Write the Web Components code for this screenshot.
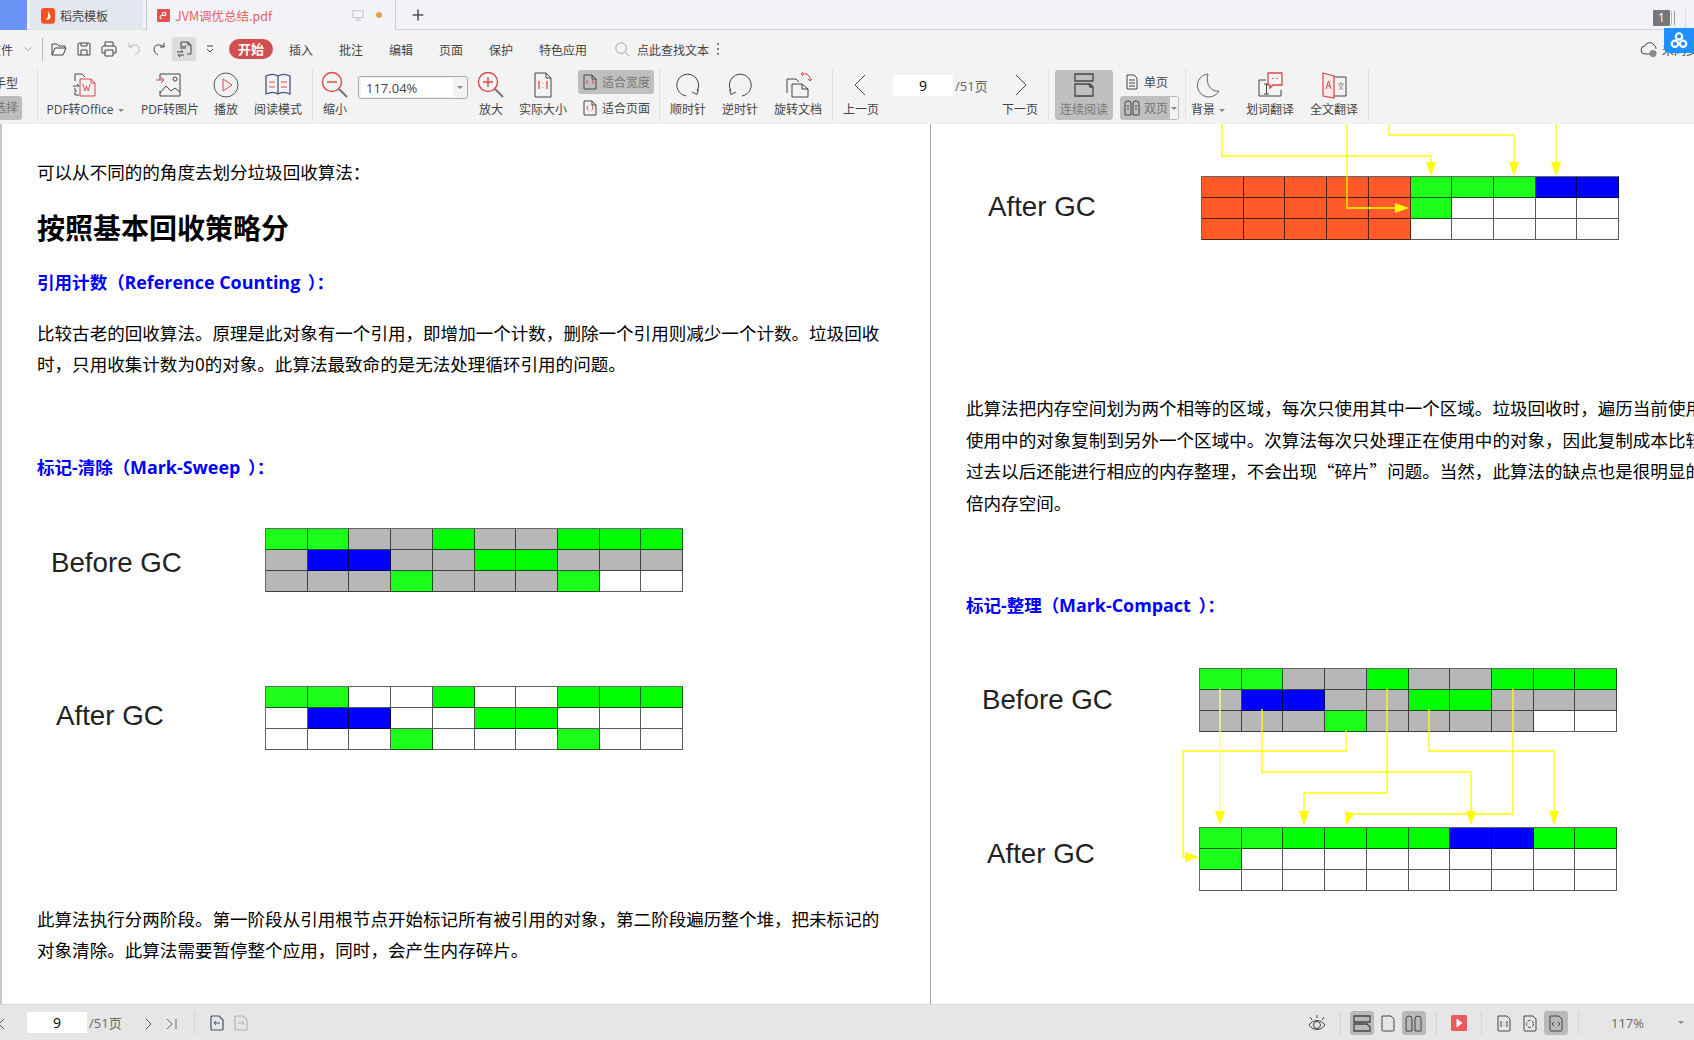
<!DOCTYPE html>
<html lang="zh-CN">
<head>
<meta charset="utf-8">
<title>JVM调优总结.pdf</title>
<style>
  html, body { margin: 0; height: 100%; overflow: hidden; background: #fff; }
  body { font-family: "Noto Sans CJK SC", "Noto Sans", sans-serif; }
</style>
</head>
<body>
<wps-app>
  <wps-titlebar slot="top"></wps-titlebar>
  <wps-menubar slot="top"></wps-menubar>
  <wps-ribbon slot="top">
    <wps-rb-left></wps-rb-left>
    <wps-sep></wps-sep>
    <wps-rb-btn icon="pdfoffice" w="94" caret>PDF转Office</wps-rb-btn>
    <wps-rb-btn icon="pdfimage" w="76">PDF转图片</wps-rb-btn>
    <wps-rb-btn icon="play" w="36">播放</wps-rb-btn>
    <wps-rb-btn icon="book" w="68">阅读模式</wps-rb-btn>
    <wps-sep></wps-sep>
    <wps-rb-btn icon="zoomout" w="44">缩小</wps-rb-btn>
    <wps-zoom-box>117.04%</wps-zoom-box>
    <wps-rb-btn icon="zoomin" w="46">放大</wps-rb-btn>
    <wps-rb-btn icon="actual" w="58">实际大小</wps-rb-btn>
    <wps-rb-pair w="87" pad="6">
      <wps-rb-small icon="fitwidth" active>适合宽度</wps-rb-small>
      <wps-rb-small icon="fitpage">适合页面</wps-rb-small>
    </wps-rb-pair>
    <wps-sep></wps-sep>
    <wps-rb-btn icon="cw" w="56">顺时针</wps-rb-btn>
    <wps-rb-btn icon="ccw" w="48">逆时针</wps-rb-btn>
    <wps-rb-btn icon="rotate" w="68">旋转文档</wps-rb-btn>
    <wps-sep></wps-sep>
    <wps-rb-btn icon="prev" w="56">上一页</wps-rb-btn>
    <wps-page-box></wps-page-box>
    <wps-rb-btn icon="next" w="36">下一页</wps-rb-btn>
    <wps-sep style="margin-left:10px"></wps-sep>
    <wps-rb-btn icon="continuous" w="58" active style="margin-left:6px">连续阅读</wps-rb-btn>
    <wps-rb-pair w="66" pad="7">
      <wps-rb-small icon="single">单页</wps-rb-small>
      <wps-rb-small icon="double" active drop>双页</wps-rb-small>
    </wps-rb-pair>
    <wps-sep style="margin-left:6px"></wps-sep>
    <wps-rb-btn icon="moon" w="44" caret>背景</wps-rb-btn>
    <wps-rb-btn icon="wordtrans" w="80">划词翻译</wps-rb-btn>
    <wps-rb-btn icon="fulltrans" w="48">全文翻译</wps-rb-btn>
    <wps-sep style="margin-left:10px"></wps-sep>
  </wps-ribbon>

  <pdf-page side="left">
    <pdf-line style="margin-top:32px">可以从不同的的角度去划分垃圾回收算法：</pdf-line>
    <pdf-line kind="h1" style="margin-top:17px">按照基本回收策略分</pdf-line>
    <pdf-line kind="sub" style="margin-top:18px">引用计数（<pdf-en>Reference Counting</pdf-en><pdf-en close>）</pdf-en>：</pdf-line>
    <pdf-line style="margin-top:20px">比较古老的回收算法。原理是此对象有一个引用，即增加一个计数，删除一个引用则减少一个计数。垃圾回收</pdf-line>
    <pdf-line>时，只用收集计数为0的对象。此算法最致命的是无法处理循环引用的问题。</pdf-line>
    <pdf-line kind="sub" style="margin-top:72px">标记-清除（<pdf-en>Mark-Sweep</pdf-en><pdf-en close>）</pdf-en>：</pdf-line>
    <gc-diagram label="Before GC" inset="14" col="228" lift="6" cells="LLxxgxxggg xbbxxggxxx xxxLxxxLww" style="margin-top:46px"></gc-diagram>
    <gc-diagram label="After GC" inset="19" col="228" lift="-4" cells="LLwwgwwggg wbbwwggwww wwwLwwwLww" style="margin-top:94px"></gc-diagram>
    <pdf-line style="margin-top:153px">此算法执行分两阶段。第一阶段从引用根节点开始标记所有被引用的对象，第二阶段遍历整个堆，把未标记的</pdf-line>
    <pdf-line>对象清除。此算法需要暂停整个应用，同时，会产生内存碎片。</pdf-line>
  </pdf-page>

  <pdf-page side="right">
    <gc-diagram label="After GC" inset="22" col="235" lift="-2" cells="oooooLLLbb oooooLwwww ooooowwwww" style="margin-top:52px"></gc-diagram>
    <pdf-line style="margin-top:152px">此算法把内存空间划为两个相等的区域，每次只使用其中一个区域。垃圾回收时，遍历当前使用的区域，把正在</pdf-line>
    <pdf-line>使用中的对象复制到另外一个区域中。次算法每次只处理正在使用中的对象，因此复制成本比较小，同时复制</pdf-line>
    <pdf-line>过去以后还能进行相应的内存整理，不会出现“碎片”问题。当然，此算法的缺点也是很明显的，就是需要两</pdf-line>
    <pdf-line>倍内存空间。</pdf-line>
    <pdf-line kind="sub" style="margin-top:72px">标记-整理（<pdf-en>Mark-Compact</pdf-en><pdf-en close>）</pdf-en>：</pdf-line>
    <gc-diagram label="Before GC" inset="16" col="233" cells="LLxxgxxggg xbbxxggxxx xxxLxxxxww" style="margin-top:48px"></gc-diagram>
    <gc-diagram label="After GC" inset="21" col="233" lift="-10" cells="LLggggbbgg Lwwwwwwwww wwwwwwwwww" style="margin-top:95px"></gc-diagram>
    <gc-arrows></gc-arrows>
  </pdf-page>

  <wps-statusbar slot="bottom"></wps-statusbar>
</wps-app>

<script>
const DK = 'stroke="#444"', RD = 'stroke="#d9474b"', GY = 'stroke="#999"';
const ICONS = {
  chev: [12, `<path d="M2 4l4 4 4-4" ${GY}/>`],
  caretline: [12, `<path d="M3 3h6M3 6l3 3 3-3" ${DK}/>`],
  folder: [18, `<path d="M2 15V4h5l2 2h6v2M2 15l3-7h11l-3 7z" ${DK}/>`],
  save: [18, `<path d="M4 3h10l1 1v11H3V4zM6 3v3h6V3M6 15v-5h6v5" ${DK}/>`],
  print: [18, `<path d="M5 6V2h8v4M5 13H2V7l1-1h12l1 1v6h-3M5 10h8v6H5z" ${DK}/>`],
  undo: [18, `<path d="M4 3v4h4M4 7c3-3 10-3 10 2 0 3-2 5-4 6" stroke="#bbb"/>`],
  redo: [18, `<path d="M14 3v4h-4M14 7c-3-3-10-3-10 2 0 3 2 5 4 6" ${DK}/>`],
  export: [18, `<path d="M6 9V2h7l3 3v9h-4M13 2v3h3" ${DK}/><path d="M7 5l1 4 1-3 1 3 1-4" stroke="#666" stroke-width=".8"/><path d="M2 12h6l-2-2M9 15H3l2 2" ${DK}/>`],
  search: [18, `<circle cx="8" cy="8" r="6" ${GY}/><path d="M12.5 12.5L17 17" ${GY}/>`],
  dots: [6, `<circle cx="3" cy="1" r="1" fill="#555" stroke="none"/><circle cx="3" cy="6" r="1" fill="#555" stroke="none"/><circle cx="3" cy="11" r="1" fill="#555" stroke="none"/>`, 12],
  cloud: [18, `<path d="M5 14a4 4 0 0 1 0-8 5 5 0 0 1 9-1 4 4 0 0 1 2 4" ${DK}/><path d="M5 14h5" ${DK}/><circle cx="13" cy="13.500" r="3.500" fill="#888" stroke="none"/>`],
  pdfoffice: [28, `<path d="M4 10V3h7l3 3M4 17v3h2M4 21v3h4" ${DK}/><path d="M9 8h11l4 4v13H9zM20 8v4h4" ${RD}/><path d="M12 13l1.800 7 1.700-5 1.700 5 1.800-7" ${RD} stroke-width=".9"/><path d="M2 15h6l-2-2" ${DK}/>`],
  pdfimage: [28, `<path d="M4 9V3h20v22H4v-5" ${DK}/><circle cx="19" cy="8" r="2" ${DK}/><path d="M4 22l6-7 5 5 4-3 5 4" ${DK}/><path d="M0 9h8l-3-3M8 9l-3 3" ${RD}/>`],
  play: [28, `<circle cx="14" cy="14" r="12" stroke="#555"/><path d="M11 8l9 6-9 6z" ${RD}/>`],
  book: [28, `<path d="M2 5c4-2 9-2 12 0 3-2 8-2 12 0v18c-4-2-9-2-12 0-3-2-8-2-12 0zM14 5v18" stroke="#46557a" stroke-width="1.300"/><path d="M5 11h6M5 16h6M17 11h6M17 16h6" ${RD}/>`],
  zoomout: [28, `<circle cx="11" cy="11" r="9.500" ${RD} stroke-width="1.400"/><path d="M6 11h10" ${RD} stroke-width="1.400"/><path d="M18 18l8 8" stroke="#777" stroke-width="2.200"/>`],
  zoomin: [28, `<circle cx="11" cy="11" r="9.500" ${RD} stroke-width="1.400"/><path d="M6 11h10M11 6v10" ${RD} stroke-width="1.400"/><path d="M18 18l8 8" stroke="#777" stroke-width="2.200"/>`],
  actual: [28, `<path d="M6 2h11l5 5v19H6zM17 2v5h5" ${DK}/><path d="M10 10v8M18 10v8" ${RD} stroke-width="1.300"/><path d="M13.800 12v.5M13.800 16v.5" ${RD} stroke-width="1.300"/>`],
  fitwidth: [16, `<path d="M2 1h8l4 4v10H2zM10 1v4h4" ${DK}/><path d="M6 6L4 8l2 2M10 6l2 2-2 2" ${RD}/>`],
  fitpage: [16, `<path d="M2 1h8l4 4v10H2zM10 1v4h4" ${DK}/><path d="M5 8a3 3 0 0 1 3-3M11 8a3 3 0 0 1-3 3M5 8a3 3 0 0 0 3 3M11 8a3 3 0 0 0-3-3" ${RD} stroke-dasharray="3 1.500"/>`],
  cw: [28, `<path d="M12 25A11 11 0 1 1 23 20" ${DK}/><path d="M18 21l5 2.500 1.500-5" ${DK}/>`],
  ccw: [28, `<path d="M16 25A11 11 0 1 0 5 20" ${DK}/><path d="M10 21l-5 2.500-1.500-5" ${DK}/>`],
  rotate: [28, `<path d="M3 22V8h9l3 3M8 26V13h10l6 5v8zM18 13v5h6" ${DK}/><path d="M17 3h6l3 3v4M26 10l-2-2M26 10l2-2M17 3l2-2M17 3l2 2" ${RD}/>`],
  prev: [28, `<path d="M18 4L8 14l10 10" ${DK}/>`],
  next: [28, `<path d="M10 4l10 10-10 10" ${DK}/>`],
  continuous: [28, `<path d="M5 3h18v7H5zM5 13h15l3 3v9H5zM19 13l1 3h3" ${DK} stroke-width="1.300"/>`],
  single: [16, `<path d="M3 1h7l3 3v11H3zM5 6h6M5 9h6M5 12h6" ${DK}/>`],
  double: [16, `<path d="M1 3q0-2 3-2t3 2v12H1zM9 3q0-2 3-2t3 2v12H9zM3 6h2M3 9h2M11 6h2M11 9h2" ${DK}/>`],
  moon: [28, `<path d="M14 3a11.500 11.500 0 1 0 11 17c-7 1.500-14-6-11-17z" stroke="#666"/>`],
  wordtrans: [28, `<path d="M10 9H3v16h22v-6" ${DK}/><path d="M8 13h5M8 23h5M10.500 13v10" ${DK}/><path d="M12 2h14v12H17l-3 3v-3h-2z" ${RD} stroke-width="1.300"/><path d="M17 7v1M21 7v1" ${RD} stroke-width="1.500"/>`],
  fulltrans: [28, `<path d="M14 6h12v19H14" ${DK}/><path d="M3 2l11 3v22L3 25z" fill="#fbe9e9" ${RD} stroke-width="1.200"/><path d="M6 18l2.500-8 2.500 8M7 15h3" ${RD}/><path d="M18 13h6M21 11v2M19 14l4 5M23 14l-4 5" stroke="#888" stroke-width=".9"/>`],
  stprev: [12, `<path d="M8 2L3 7l5 5" stroke="#556"/>`],
  stnext: [12, `<path d="M4 2l5 5-5 5" stroke="#556"/>`],
  stlast: [12, `<path d="M1 2l5 5-5 5M10 2v10" stroke="#667"/>`],
  goback: [16, `<path d="M2 2q0-1 1-1h7l4 4v9q0 1-1 1H3q-1 0-1-1z" stroke="#3f5478" stroke-width="1.200"/><path d="M11 8H5l2-2M5 8l2 2" stroke="#3f5478"/>`],
  gofwd: [16, `<path d="M2 2q0-1 1-1h7l4 4v9q0 1-1 1H3q-1 0-1-1z" stroke="#b5b5b5" stroke-width="1.200"/><path d="M5 8h6L9 6M11 8l-2 2" stroke="#b5b5b5"/>`],
  eye: [20, `<path d="M2 12c4-6 12-6 16 0-4 6-12 6-16 0z" ${DK}/><circle cx="10" cy="12" r="3.500" ${DK}/><path d="M10 2v3M3 4l2 3M17 4l-2 3" ${DK}/>`],
  stcont: [20, `<path d="M2 3h16v6H2zM2 11h13l3 3v4H2z" ${DK} stroke-width="1.300"/>`],
  stpage: [20, `<path d="M4 3h9l3 3v11q0 1-1 1H5q-1 0-1-1z" ${DK}/>`],
  stdouble: [20, `<path d="M2 6q0-3 3-3t3 3v12H2zM11 6q0-3 3-3t3 3v12h-6z" ${DK}/>`],
  st11: [20, `<path d="M4 3h9l3 3v11q0 1-1 1H5q-1 0-1-1z" ${DK}/><path d="M7 8v6M13 8v6M10 9.500v.5M10 12.500v.5" ${DK}/>`],
  stfit: [20, `<path d="M4 3h9l3 3v11q0 1-1 1H5q-1 0-1-1z" ${DK}/><circle cx="10" cy="11" r="3.500" ${DK} stroke-dasharray="3 1.500"/>`],
  stwide: [20, `<path d="M4 3h9l3 3v11q0 1-1 1H5q-1 0-1-1z" ${DK}/><path d="M8 9l-2 2 2 2M12 9l2 2-2 2" ${DK}/>`],
  stplay: [16, `<rect width="16" height="16" rx="1.500" fill="#e85c5c" stroke="none"/><path d="M5.500 3.500l6 4.500-6 4.500z" fill="#fff" stroke="none"/>`],
  logo: [16, `<rect width="16" height="18" rx="3.500" fill="#f4511e" stroke="none"/><path d="M8 3c1 3 3 4 3 7a3.500 3.500 0 0 1-6 2.500c2 0 4-2 3-9.500z" fill="#fff" stroke="none"/>`],
  pdflogo: [16, `<rect width="16" height="16" rx="1.500" fill="#e8504f" stroke="none"/><path d="M6 12c-3 0-3-4 0-4h3a2 2 0 1 0-2-2v2" stroke="#fff" stroke-width="1.400"/>`],
  monitor: [16, `<path d="M2 3h12v8H2zM8 11v3M5 14h6" stroke="#bbb"/>`],
  plus: [18, `<path d="M9 2v14M2 9h14" stroke="#555" stroke-width="2"/>`],
  baidu: [22, `<circle cx="11" cy="6" r="3.500" stroke="#fff" stroke-width="2.400"/><circle cx="6.500" cy="14" r="3.500" stroke="#fff" stroke-width="2.400"/><circle cx="15.500" cy="14" r="3.500" stroke="#fff" stroke-width="2.400"/>`]
};

class WpsIcon extends HTMLElement {
  connectedCallback() {
    const def = ICONS[this.getAttribute('name')];
    const vb = def[0], h = def[2] || vb;
    const size = this.getAttribute('size') || vb;
    const sh = size * h / vb;
    this.attachShadow({mode: 'open'}).innerHTML = `
      <style>
        :host { display: inline-flex; flex: none; align-items: center; justify-content: center; line-height: 0; }
        svg { fill: none; stroke-width: 1; overflow: visible; }
      </style>
      <svg width="${size}" height="${sh}" viewBox="0 0 ${vb} ${h}">${def[1]}</svg>`;
  }
}
customElements.define('wps-icon', WpsIcon);

class WpsApp extends HTMLElement {
  constructor() {
    super();
    this.attachShadow({mode: 'open'}).innerHTML = `
      <style>
        :host { display: flex; flex-direction: column; height: 100vh; overflow: hidden; position: relative; }
        .pages { flex: 1; display: flex; min-height: 0; background: #fff; }
      </style>
      <slot name="top"></slot>
      <div class="pages"><slot></slot></div>
      <slot name="bottom"></slot>`;
  }
}
customElements.define('wps-app', WpsApp);

class WpsTab extends HTMLElement {
  constructor() {
    super();
    this.attachShadow({mode: 'open'}).innerHTML = `
      <style>
        :host { display: flex; align-items: center; box-sizing: border-box; height: 30px; font-size: 12px; color: #444; background: #e3e7f0; padding-left: 11px; gap: 5px; }
        :host([active]) { background: #f3f4f7; color: #e8625f; border: 1px solid #c9cbdc; border-bottom: 0; border-top: 0; padding-left: 10px; font-size: 12.5px; z-index: 1; }
        ::slotted([slot=end]) { margin-left: auto; }
      </style>
      <slot name="icon"></slot><slot></slot><slot name="end"></slot>`;
  }
}
customElements.define('wps-tab', WpsTab);

class WpsTitlebar extends HTMLElement {
  constructor() {
    super();
    this.attachShadow({mode: 'open'}).innerHTML = `
      <style>
        :host { display: flex; flex: none; height: 29px; background: #f2f3f7; border-bottom: 1px solid #cfd0e0; position: relative; align-items: flex-start; }
        .blue { width: 27px; height: 30px; background: #6b93f6; margin-right: 3px; }
        wps-tab { width: 113px; margin-right: 3px; }
        wps-tab[active] { width: 250px; margin-right: 15px; }
        .plus { margin-top: 8px; }
        .end { display: flex; align-items: center; margin-left: auto; margin-top: 8px; }
        .num { width: 17px; height: 16px; background: #777; color: #fff; font: 12px/16px "Open Sans", sans-serif; text-align: center; border-radius: 1px; }
        .bars { width: 2px; height: 14px; border-right: 1px solid #999; border-left: 1px solid #bbb; margin: 0 10px 0 1px; }
        .line { width: 1px; height: 20px; background: #ddd; margin-right: 8px; }
        .tools { display: flex; align-items: center; flex: none; width: 44px; }
        .dot { flex: none; width: 6px; height: 6px; border-radius: 50%; background: #e8a15a; margin: 0 13px 0 11px; }
      </style>
      <div class="blue"></div>
      <wps-tab><wps-icon slot="icon" name="logo" size="14"></wps-icon>稻壳模板</wps-tab>
      <wps-tab active><wps-icon slot="icon" name="pdflogo" size="13"></wps-icon>JVM调优总结.pdf<span slot="end" class="tools"><wps-icon name="monitor" size="14"></wps-icon><span class="dot"></span></span></wps-tab>
      <wps-icon class="plus" name="plus" size="14"></wps-icon>
      <div class="end"><div class="num">1</div><div class="bars"></div><div class="line"></div></div>`;
  }
}
customElements.define('wps-titlebar', WpsTitlebar);

class WpsMenubar extends HTMLElement {
  constructor() {
    super();
    const tabs = ['插入', '批注', '编辑', '页面', '保护'].map(t => `<span class="tab">${t}</span>`).join('');
    const tools = ['folder', 'save', 'print', 'undo', 'redo'].map(n => `<span class="tool"><wps-icon name="${n}"></wps-icon></span>`).join('');
    this.attachShadow({mode: 'open'}).innerHTML = `
      <style>
        :host { display: flex; flex: none; align-items: center; height: 38px; background: #f3f3f3; font-size: 12px; color: #444; position: relative; white-space: nowrap; }
        .file { margin-left: -11px; width: 24px; }
        .vsep { width: 1px; height: 23px; background: #bbb; margin: 0 4px 0 9px; }
        .tool { display: flex; align-items: center; justify-content: center; width: 24px; height: 24px; margin-right: 1px; border-radius: 2px; }
        .tool.on { background: #dcdcdc; margin-right: 0; }
        .pill { width: 44px; height: 20px; margin-left: 13px; border-radius: 10px; background: #d24f51; color: #fff; font-weight: 700; font-size: 13px; line-height: 20px; text-align: center; }
        .tab { width: 50px; text-align: center; }
        .tab:first-of-type { margin-left: 3px; }
        .end { margin-left: auto; display: flex; align-items: center; width: 54px; gap: 4px; overflow: hidden; }
      </style>
      <span class="file">文件</span>
      <wps-icon name="chev" size="10" style="margin-left:10px"></wps-icon>
      <span class="vsep"></span>
      ${tools}
      <span class="tool on"><wps-icon name="export"></wps-icon></span>
      <wps-icon name="caretline" style="margin-left:8px"></wps-icon>
      <span class="pill">开始</span>
      <span style="display:contents">${tabs}</span>
      <span style="margin-left:13px">特色应用</span>
      <wps-icon name="search" size="16" style="margin-left:27px"></wps-icon>
      <span style="margin-left:7px">点此查找文本</span>
      <wps-icon name="dots" style="margin-left:6px"></wps-icon>
      <div class="end"><wps-icon name="cloud"></wps-icon><span>未同步</span></div>
      <div style="position:absolute;right:0;top:-2px;width:30px;height:25px;background:#1e90ff;border-radius:0 0 0 5px;display:flex;align-items:center;justify-content:center"><wps-icon name="baidu" size="20"></wps-icon></div>`;
  }
}
customElements.define('wps-menubar', WpsMenubar);

class WpsRibbon extends HTMLElement {
  constructor() {
    super();
    this.attachShadow({mode: 'open'}).innerHTML = `
      <style>
        :host { display: flex; flex: none; height: 56px; background: #f3f3f3; box-sizing: border-box; border-bottom: 1px solid #ededed; font-family: "Open Sans", "Noto Sans CJK SC", sans-serif; font-size: 12px; color: #444; white-space: nowrap; }
      </style>
      <slot></slot>`;
  }
}
customElements.define('wps-ribbon', WpsRibbon);

class WpsSep extends HTMLElement {
  constructor() {
    super();
    this.attachShadow({mode: 'open'}).innerHTML = `
      <style>:host { flex: none; width: 1px; height: 53px; background: #e2e2e2; }</style>`;
  }
}
customElements.define('wps-sep', WpsSep);

class WpsRbLeft extends HTMLElement {
  constructor() {
    super();
    this.attachShadow({mode: 'open'}).innerHTML = `
      <style>
        :host { display: flex; flex-direction: column; flex: none; width: 37px; padding-top: 7px; box-sizing: border-box; }
        .a { height: 18px; line-height: 18px; margin-left: -6px; }
        .b { margin-top: 3px; width: 22px; height: 24px; background: #bdbdbd; border-radius: 0 3px 3px 0; color: #777; line-height: 24px; text-indent: -6px; }
      </style>
      <div class="a">手型</div><div class="b">选择</div>`;
  }
}
customElements.define('wps-rb-left', WpsRbLeft);

class WpsRbBtn extends HTMLElement {
  constructor() { super(); this.attachShadow({mode: 'open'}); }
  connectedCallback() {
    const caret = this.hasAttribute('caret') ? '<i></i>' : '';
    this.shadowRoot.innerHTML = `
      <style>
        :host { display: flex; flex-direction: column; align-items: center; flex: none; box-sizing: border-box; width: ${this.getAttribute('w')}px; height: 53px; padding-top: 3px; border-radius: 3px; }
        :host([active]) { background: #bfbfbf; color: #777; height: 50px; margin-top: 2px; padding-top: 1px; }
        .label { margin-top: 3px; line-height: 16px; display: flex; align-items: center; }
        i { width: 0; height: 0; border: 3px solid transparent; border-top-color: #888; border-bottom: 0; margin-left: 4px; }
      </style>
      <wps-icon name="${this.getAttribute('icon')}"></wps-icon>
      <div class="label"><slot></slot>${caret}</div>`;
  }
}
customElements.define('wps-rb-btn', WpsRbBtn);

class WpsRbPair extends HTMLElement {
  constructor() { super(); this.attachShadow({mode: 'open'}); }
  connectedCallback() {
    this.shadowRoot.innerHTML = `
      <style>
        :host { display: flex; flex-direction: column; flex: none; box-sizing: border-box; gap: 2px; padding-top: 2px; width: ${this.getAttribute('w')}px; padding-left: ${this.getAttribute('pad')}px; }
      </style>
      <slot></slot>`;
  }
}
customElements.define('wps-rb-pair', WpsRbPair);

class WpsRbSmall extends HTMLElement {
  constructor() { super(); this.attachShadow({mode: 'open'}); }
  connectedCallback() {
    const drop = this.hasAttribute('drop') ? '<b><i></i></b>' : '';
    this.shadowRoot.innerHTML = `
      <style>
        :host { display: flex; align-items: center; box-sizing: border-box; height: 24px; gap: 4px; padding-left: 4px; border-radius: 3px; position: relative; margin-right: 5px; }
        :host([active]) { background: #bfbfbf; color: #777; }
        :host([drop]) { margin-right: 0; }
        b { position: absolute; right: 1px; top: 1px; bottom: 1px; width: 8px; background: #f3f3f3; display: flex; align-items: center; justify-content: center; }
        i { width: 0; height: 0; border: 3px solid transparent; border-top-color: #888; border-bottom: 0; }
      </style>
      <wps-icon name="${this.getAttribute('icon')}"></wps-icon><span><slot></slot></span>${drop}`;
  }
}
customElements.define('wps-rb-small', WpsRbSmall);

class WpsZoomBox extends HTMLElement {
  constructor() {
    super();
    this.attachShadow({mode: 'open'}).innerHTML = `
      <style>
        :host { display: flex; align-items: center; flex: none; box-sizing: border-box; width: 110px; height: 23px; margin: 8px 0 0 1px; border: 1px solid #aaa; border-radius: 3px; background: #f3f3f3; padding-left: 7px; font: 13px "Open Sans", sans-serif; position: relative; }
        :host::before { content: ""; position: absolute; left: 2px; right: 14px; top: 1px; bottom: 1px; background: #fff; }
        span { position: relative; }
        i { position: absolute; right: 4px; top: 9px; width: 0; height: 0; border: 3px solid transparent; border-top-color: #888; border-bottom: 0; }
      </style>
      <span><slot></slot></span><i></i>`;
  }
}
customElements.define('wps-zoom-box', WpsZoomBox);

class WpsPageBox extends HTMLElement {
  constructor() {
    super();
    this.attachShadow({mode: 'open'}).innerHTML = `
      <style>
        :host { display: flex; flex: none; align-items: center; width: 113px; height: 21px; margin-top: 7px; padding-left: 4px; box-sizing: border-box; }
        .in { width: 60px; height: 21px; background: #fff; text-align: center; color: #000; font: 14px/21px "Open Sans", sans-serif; }
        .of { margin-left: 2px; color: #666; font-size: 13px; }
      </style>
      <div class="in">9</div><div class="of">/51页</div>`;
  }
}
customElements.define('wps-page-box', WpsPageBox);

class PdfPage extends HTMLElement {
  constructor() {
    super();
    this.attachShadow({mode: 'open'}).innerHTML = `
      <style>
        :host { display: block; position: relative; overflow: hidden; box-sizing: border-box; background: #fff; }
        :host([side=left]) { flex: none; width: 931px; padding-left: 35px; border-left: 2px solid #c8c8c8; border-right: 1px solid #aaa; }
        :host([side=right]) { flex: 1; min-width: 0; padding-left: 35px; }
      </style>
      <slot></slot>`;
  }
}
customElements.define('pdf-page', PdfPage);

class PdfLine extends HTMLElement {
  constructor() {
    super();
    this.attachShadow({mode: 'open'}).innerHTML = `
      <style>
        :host { display: block; white-space: nowrap; font-size: 17.56px; line-height: 31.5px; color: #000; }
        :host([kind=h1]) { font-size: 28px; line-height: 44px; font-weight: 700; }
        :host([kind=sub]) { font-family: "Open Sans", "Noto Sans CJK SC", sans-serif; line-height: 30px; font-weight: 700; color: #0000ff; }
      </style>
      <slot></slot>`;
  }
}
customElements.define('pdf-line', PdfLine);

// the latin run of a blue heading and its closing bracket sit apart from the font's own spacing
class PdfEn extends HTMLElement {
  constructor() {
    super();
    this.attachShadow({mode: 'open'}).innerHTML = `
      <style>
        :host { display: inline; font-size: 17.9px; line-height: 1; margin: 0 3px 0 -5px; }
        :host([close]) { font-size: inherit; margin: 0; }
      </style>
      <slot></slot>`;
  }
}
customElements.define('pdf-en', PdfEn);

const CELL = { L: '#1bff1b', g: '#00ff00', x: '#b7b7b7', b: '#0000ff', w: '#fff', o: '#ff5a28' };

class GcDiagram extends HTMLElement {
  constructor() { super(); this.attachShadow({mode: 'open'}); }
  connectedCallback() {
    const cells = this.getAttribute('cells').replace(/ /g, '').split('')
      .map(c => `<div style="background:${CELL[c]}"></div>`).join('');
    // lift: nudges the label inside its row, it stays centred with the grid otherwise
    const lift = Number(this.getAttribute('lift') || 0);
    this.shadowRoot.innerHTML = `
      <style>
        :host { display: grid; grid-template-columns: ${this.getAttribute('col')}px 418px; align-items: center; height: 64px; }
        .label { padding: ${Math.max(lift, 0)}px 0 ${Math.max(-lift, 0)}px ${this.getAttribute('inset')}px; font: 27.7px/32px "Liberation Sans", Arial, sans-serif; color: #222; }
        .grid { display: grid; grid-template-columns: repeat(10, 1fr); grid-template-rows: repeat(3, 21px); border-top: 1px solid #666; border-left: 1px solid #666; filter: blur(.35px); }
        .grid div { border-right: 1px solid rgba(0,0,0,.65); border-bottom: 1px solid rgba(0,0,0,.65); }
      </style>
      <div class="label">${this.getAttribute('label')}</div>
      <div class="grid">${cells}</div>`;
  }
}
customElements.define('gc-diagram', GcDiagram);

class GcArrows extends HTMLElement {
  constructor() {
    super();
    const lines = [
      'M1222 124V156H1431V164', 'M1347 124V208H1397', 'M1389 124V135H1514V164', 'M1556 124V164',
      'M1262 709V772H1471V813', 'M1346 730V751H1183V857H1187', 'M1387 688V793H1304V813',
      'M1429 709V751H1554V813', 'M1513 688V814H1352'
    ].map(d => `<path d="${d}"/>`).join('');
    const heads = [
      [1431, 176], [1514, 176], [1556, 176], [1471, 825], [1304, 825], [1554, 825], [1220, 825]
    ].map(([x, y]) => `<path class="h" d="M${x - 5} ${y - 14}h10L${x} ${y}z"/>`).join('');
    this.attachShadow({mode: 'open'}).innerHTML = `
      <style>
        :host { position: absolute; inset: 0; pointer-events: none; }
        svg { display: block; width: 100%; height: 100%; }
        path { fill: none; stroke: #ffff00; stroke-width: 1.3; }
        .pale { stroke: #ffff80; }
        .h { fill: #ffff00; stroke: none; }
      </style>
      <svg><g transform="translate(-931 -124)">
        ${lines}
        <path class="pale" d="M1220 688V813"/>
        ${heads}
        <path class="h" d="M1395 203V213L1409 208z"/>
        <path class="h" d="M1185 852V862L1199 857z"/>
        <path class="h" d="M1345 811L1354 814L1346 825z"/>
      </g></svg>`;
  }
}
customElements.define('gc-arrows', GcArrows);

class WpsStatusbar extends HTMLElement {
  constructor() {
    super();
    this.attachShadow({mode: 'open'}).innerHTML = `
      <style>
        :host { display: flex; flex: none; align-items: center; box-sizing: border-box; height: 36px; background: #e6e6e6; border-top: 1px solid #d8d8d8; font-family: "Open Sans", "Noto Sans CJK SC", sans-serif; font-size: 13px; color: #666; white-space: nowrap; }
        .in { width: 60px; height: 21px; background: #fff; color: #000; text-align: center; font: 14px/21px "Open Sans", sans-serif; }
        .sep { flex: none; width: 1px; height: 24px; background: #d4d4d4; }
        .b { display: flex; align-items: center; justify-content: center; width: 24px; height: 24px; border-radius: 3px; flex: none; }
        .on { background: #b9b9b9; }
        .pct { font-size: 13px; width: 31px; }
        i { display: block; width: 0; height: 0; border: 3px solid transparent; border-top-color: #888; border-bottom: 0; }
      </style>
      <wps-icon name="stprev" style="margin-left:-4px"></wps-icon>
      <div class="in" style="margin-left:19px">9</div>
      <span style="margin-left:2px;width:33px">/51页</span>
      <wps-icon name="stnext" style="margin-left:20px"></wps-icon>
      <wps-icon name="stlast" style="margin-left:12px"></wps-icon>
      <span class="sep" style="margin-left:16px"></span>
      <wps-icon name="goback" style="margin-left:14px"></wps-icon>
      <wps-icon name="gofwd" style="margin-left:8px"></wps-icon>
      <span class="b" style="margin-left:auto"><wps-icon name="eye"></wps-icon></span>
      <span class="sep" style="margin-left:11px"></span>
      <span class="b on" style="margin-left:9px"><wps-icon name="stcont"></wps-icon></span>
      <span class="b" style="margin-left:2px"><wps-icon name="stpage"></wps-icon></span>
      <span class="b on" style="margin-left:2px"><wps-icon name="stdouble"></wps-icon></span>
      <span class="sep" style="margin-left:10px"></span>
      <wps-icon name="stplay" style="margin-left:14px"></wps-icon>
      <span class="sep" style="margin-left:14px"></span>
      <span class="b" style="margin-left:10px"><wps-icon name="st11"></wps-icon></span>
      <span class="b" style="margin-left:2px"><wps-icon name="stfit"></wps-icon></span>
      <span class="b on" style="margin-left:2px"><wps-icon name="stwide"></wps-icon></span>
      <span class="sep" style="margin-left:10px"></span>
      <span class="pct" style="margin-left:32px">117%</span>
      <i style="margin-left:36px;margin-right:10px"></i>`;
  }
}
customElements.define('wps-statusbar', WpsStatusbar);
</script>
</body>
</html>
